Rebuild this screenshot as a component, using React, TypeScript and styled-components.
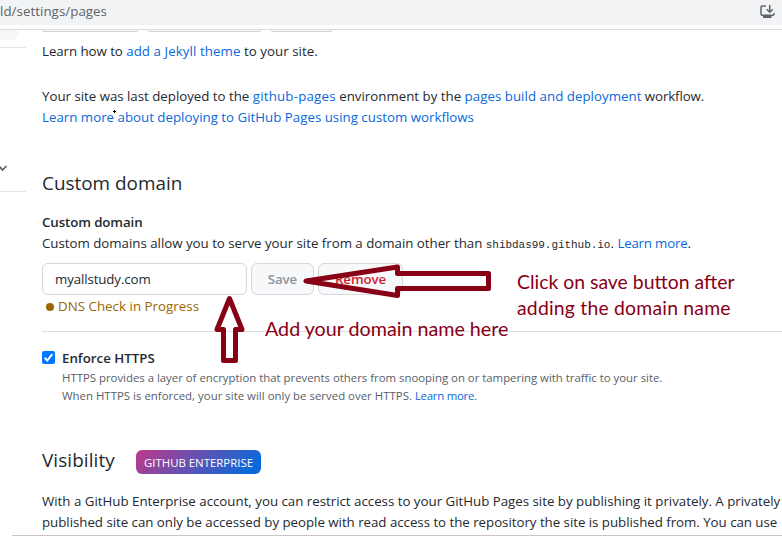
import React from 'react';
import styled, { createGlobalStyle } from 'styled-components';

const GlobalStyle = createGlobalStyle`
  * { box-sizing: border-box; }
  html, body { margin: 0; overflow: hidden; }
  body {
    background: #fff;
    color: #24292f;
    font: 13.3px/21px "Open Sans", sans-serif;
    font-kerning: normal;
  }
`;

const Window = styled.div`
  position: relative;
  width: 782px;
  height: 536px;
  overflow: hidden;
  display: flex;
  flex-direction: column;
`;
const BrowserBar = styled.header`
  height: 30px;
  flex: none;
  border-bottom: 1px solid #d9dcdf;
`;
const AddressBar = styled.div`
  display: flex;
  align-items: center;
  justify-content: space-between;
  height: 25px;
  padding: 0 7px 2px 0;
  background: #f1f3f4;
  color: #5f6368;
`;
const Page = styled.div`
  display: flex;
  flex: 1;
  min-height: 0;
`;
const Sidebar = styled.aside`
  width: 26px;
  flex: none;
`;
const SidebarActive = styled.div`
  width: 18px;
  height: 10px;
  border-radius: 0 0 6px 0;
  background: #f5f6f7;
`;
const SidebarRule = styled.div<{ $gap: number }>`
  height: 1px;
  margin-top: ${p => p.$gap}px;
  background: #e4e7ea;
`;
const SidebarToggle = styled.div`
  display: flex;
  height: 12px;
  margin-top: 114px;
`;
const Main = styled.main`
  flex: none;
  width: 740px;
  margin-left: 16px;
`;
const ClippedButtons = styled.div`
  display: flex;
  gap: 10px;
  height: 11px;
`;
const ClippedButton = styled.div<{ $width: number }>`
  width: ${p => p.$width}px;
  height: 2px;
  border: 1px solid #d0d4d9;
  border-top: 0;
  border-radius: 0 0 6px 6px;
  background: #f6f8fa;
`;
const Paragraph = styled.p<{ $top?: number }>`
  margin: ${p => p.$top ?? 0}px 0 0;
  white-space: nowrap;
`;
const Run = styled.span<{ $track?: number }>`
  letter-spacing: ${p => p.$track ?? 0}px;
`;
const Link = styled.a<{ $track?: number }>`
  color: #0969da;
  letter-spacing: ${p => p.$track ?? 0}px;
`;
const Code = styled.code`
  font: 11px "Liberation Mono", monospace;
  letter-spacing: -0.04px;
`;
const Title = styled.h2`
  margin: 0;
  font-size: 18.9px;
  font-weight: 400;
  line-height: 30px;
`;
const DomainTitle = styled(Title)`
  margin-top: 40px;
`;
const FieldLabel = styled.label`
  display: block;
  margin-top: 14px;
  font-weight: 600;
  letter-spacing: -0.1px;
`;
const DomainForm = styled.form`
  display: flex;
  gap: 4px;
  margin-top: 9px;
`;
const DomainInput = styled.input`
  width: 205px;
  height: 32px;
  padding: 0 12px 1px;
  border: 1px solid #d0d7de;
  border-radius: 6px;
  outline: 0;
  background: #fff;
  color: #24292f;
  font: 13.3px "Open Sans", sans-serif;
  letter-spacing: -0.12px;
`;
const Button = styled.button<{ $width: number; $color: string }>`
  width: ${p => p.$width}px;
  height: 32px;
  padding: 0 0 1px;
  border: 1px solid #d5d9de;
  border-radius: 6px;
  background: #f6f8fa;
  color: ${p => p.$color};
  font: 600 13.3px "Open Sans", sans-serif;
  letter-spacing: -0.1px;
`;
const Status = styled.div`
  display: flex;
  align-items: center;
  gap: 4px;
  height: 21px;
  padding-left: 4px;
  margin-top: 1px;
  color: #9a6700;
`;
const StatusDot = styled.span`
  width: 8px;
  height: 8px;
  margin-top: 1px;
  border-radius: 50%;
  background: #9a6700;
`;
const Divider = styled.hr`
  height: 1px;
  margin: 14px 0 0;
  border: 0;
  background: #d8dee4;
`;
const CheckRow = styled.div`
  display: flex;
  gap: 7px;
  margin-top: 16px;
`;
const CheckBox = styled.span`
  display: flex;
  width: 13px;
  height: 13px;
  margin-top: 3px;
  border-radius: 2px;
  background: #0075ff;
`;
const CheckLabel = styled.div`
  font-weight: 600;
`;
const Note = styled.p`
  margin: 0;
  color: #57606a;
  font-size: 11.4px;
  line-height: 18px;
  white-space: nowrap;
`;
const VisibilityRow = styled.div`
  display: flex;
  align-items: center;
  gap: 20px;
  height: 30px;
  margin-top: 40px;
`;
const VisibilityTitle = styled(Title)`
  width: 74px;
  letter-spacing: 0.1px;
`;
const Badge = styled.span`
  display: flex;
  align-items: center;
  justify-content: center;
  width: 125px;
  height: 24px;
  margin-top: 4px;
  border-radius: 6px;
  background: linear-gradient(135deg, #bf3989, #0969da 90%);
  color: #fff;
  font-size: 11.4px;
`;
const BottomEdge = styled.div`
  height: 1px;
  flex: none;
  margin-left: 12px;
  background: #c6c6c6;
`;
const Drawing = styled.svg`
  position: absolute;
  inset: 0;
  pointer-events: none;
`;
const Annotation = styled.div<{ $x: number; $y: number; $size: number }>`
  position: absolute;
  left: ${p => p.$x}px;
  top: ${p => p.$y}px;
  color: #880015;
  font: ${p => p.$size}px/26px Lato, sans-serif;
  white-space: nowrap;
`;

const InstallIcon = () => (
  <svg width="15" height="14" viewBox="0 0 15 14" fill="none" stroke="#5f6368" strokeWidth="1.5">
    <path d="M6 .9H2.2Q1 .9 1 2v7q0 1.2 1.2 1.2h10.6q1.2 0 1.2-1.2V8" />
    <path d="M9.7 0v7M6.7 4.2l3 3 3-3" />
    <path d="M3 11.6h8.5" strokeWidth="2.8" />
  </svg>
);

export default function App() {
  return (
    <Window>
      <GlobalStyle />
      <BrowserBar>
        <AddressBar>
          <Run $track={0.05}>ld/settings/pages</Run>
          <InstallIcon />
        </AddressBar>
      </BrowserBar>
      <Page>
        <Sidebar>
          <SidebarActive />
          <SidebarRule $gap={7} />
          <SidebarToggle>
            <svg width="10" height="12" fill="none" stroke="#57606a" strokeWidth="1.7">
              <path d="M-1 4 2.5 8 6.5 4" />
            </svg>
          </SidebarToggle>
          <SidebarRule $gap={17} />
        </Sidebar>
        <Main>
          <ClippedButtons>
            <ClippedButton $width={96} />
            <ClippedButton $width={113} />
            <ClippedButton $width={61} />
          </ClippedButtons>
          <Paragraph>
            <Run $track={-0.06}>Learn how to </Run>
            <Link $track={0.08}>add a Jekyll theme</Link>
            <Run $track={0.03}> to your site.</Run>
          </Paragraph>
          <Paragraph $top={24}>
            <Run $track={-0.02}>Your site was last deployed to the </Run>
            <Link $track={0.2}>github-pages</Link>
            <Run> environment by the </Run>
            <Link $track={0.03}>pages build and deployment</Link>
            <Run $track={-0.12}> workflow.</Run>
          </Paragraph>
          <Paragraph>
            <Link>Learn more about deploying to GitHub Pages using custom workflows</Link>
          </Paragraph>
          <DomainTitle>Custom domain</DomainTitle>
          <FieldLabel>Custom domain</FieldLabel>
          <Paragraph>
            <Run $track={-0.02}>
              Custom domains allow you to serve your site from a domain other than{' '}
            </Run>
            <Code>shibdas99.github.io</Code>. <Link $track={-0.2}>Learn more</Link>.
          </Paragraph>
          <DomainForm>
            <DomainInput defaultValue="myallstudy.com" />
            <Button type="button" $width={63} $color="#8c959f">Save</Button>
            <Button type="button" $width={85} $color="#cf222e">Remove</Button>
          </DomainForm>
          <Status>
            <StatusDot />
            <Run $track={0.03}>DNS Check in Progress</Run>
          </Status>
          <Divider />
          <CheckRow>
            <CheckBox>
              <svg width="13" height="13" fill="none" stroke="#fff" strokeWidth="2">
                <path d="m2.7 6.8 2.6 2.7 5-6.4" />
              </svg>
            </CheckBox>
            <div>
              <CheckLabel>Enforce HTTPS</CheckLabel>
              <Note>
                <Run $track={-0.01}>
                  HTTPS provides a layer of encryption that prevents others from snooping on or
                  tampering with traffic to your site.
                </Run>
              </Note>
              <Note>
                <Run $track={0.02}>
                  When HTTPS is enforced, your site will only be served over HTTPS.{' '}
                </Run>
                <Link $track={-0.25}>Learn more</Link>.
              </Note>
            </div>
          </CheckRow>
          <VisibilityRow>
            <VisibilityTitle>Visibility</VisibilityTitle>
            <Badge>GITHUB ENTERPRISE</Badge>
          </VisibilityRow>
          <Paragraph $top={16}>
            <Run $track={-0.01}>
              With a GitHub Enterprise account, you can restrict access to your GitHub Pages site by
              publishing it privately. A privately
            </Run>
          </Paragraph>
          <Paragraph>
            <Run $track={-0.03}>
              published site can only be accessed by people with read access to the repository the
              site is published from. You can use
            </Run>
          </Paragraph>
        </Main>
      </Page>
      <BottomEdge />
      <Drawing width="782" height="536" fill="none" stroke="#880015" strokeWidth="5" strokeLinejoin="round">
        <path d="M306 281 397.5 267V273.5H488.5V288.5H397.5V295.5Z" />
        <path d="M229.5 298.5 217 329.5H223.5V360.5H235.5V329.5H242Z" />
        <path d="M114.5 110v3M113 111.5h3" stroke="#000" strokeWidth="1" />
      </Drawing>
      <Annotation $x={265} $y={316} $size={19.7}>Add your domain name here</Annotation>
      <Annotation $x={517} $y={269} $size={19.4}>
        Click on save button after
        <br />
        <Run $track={0.2}>adding the domain name</Run>
      </Annotation>
    </Window>
  );
}
